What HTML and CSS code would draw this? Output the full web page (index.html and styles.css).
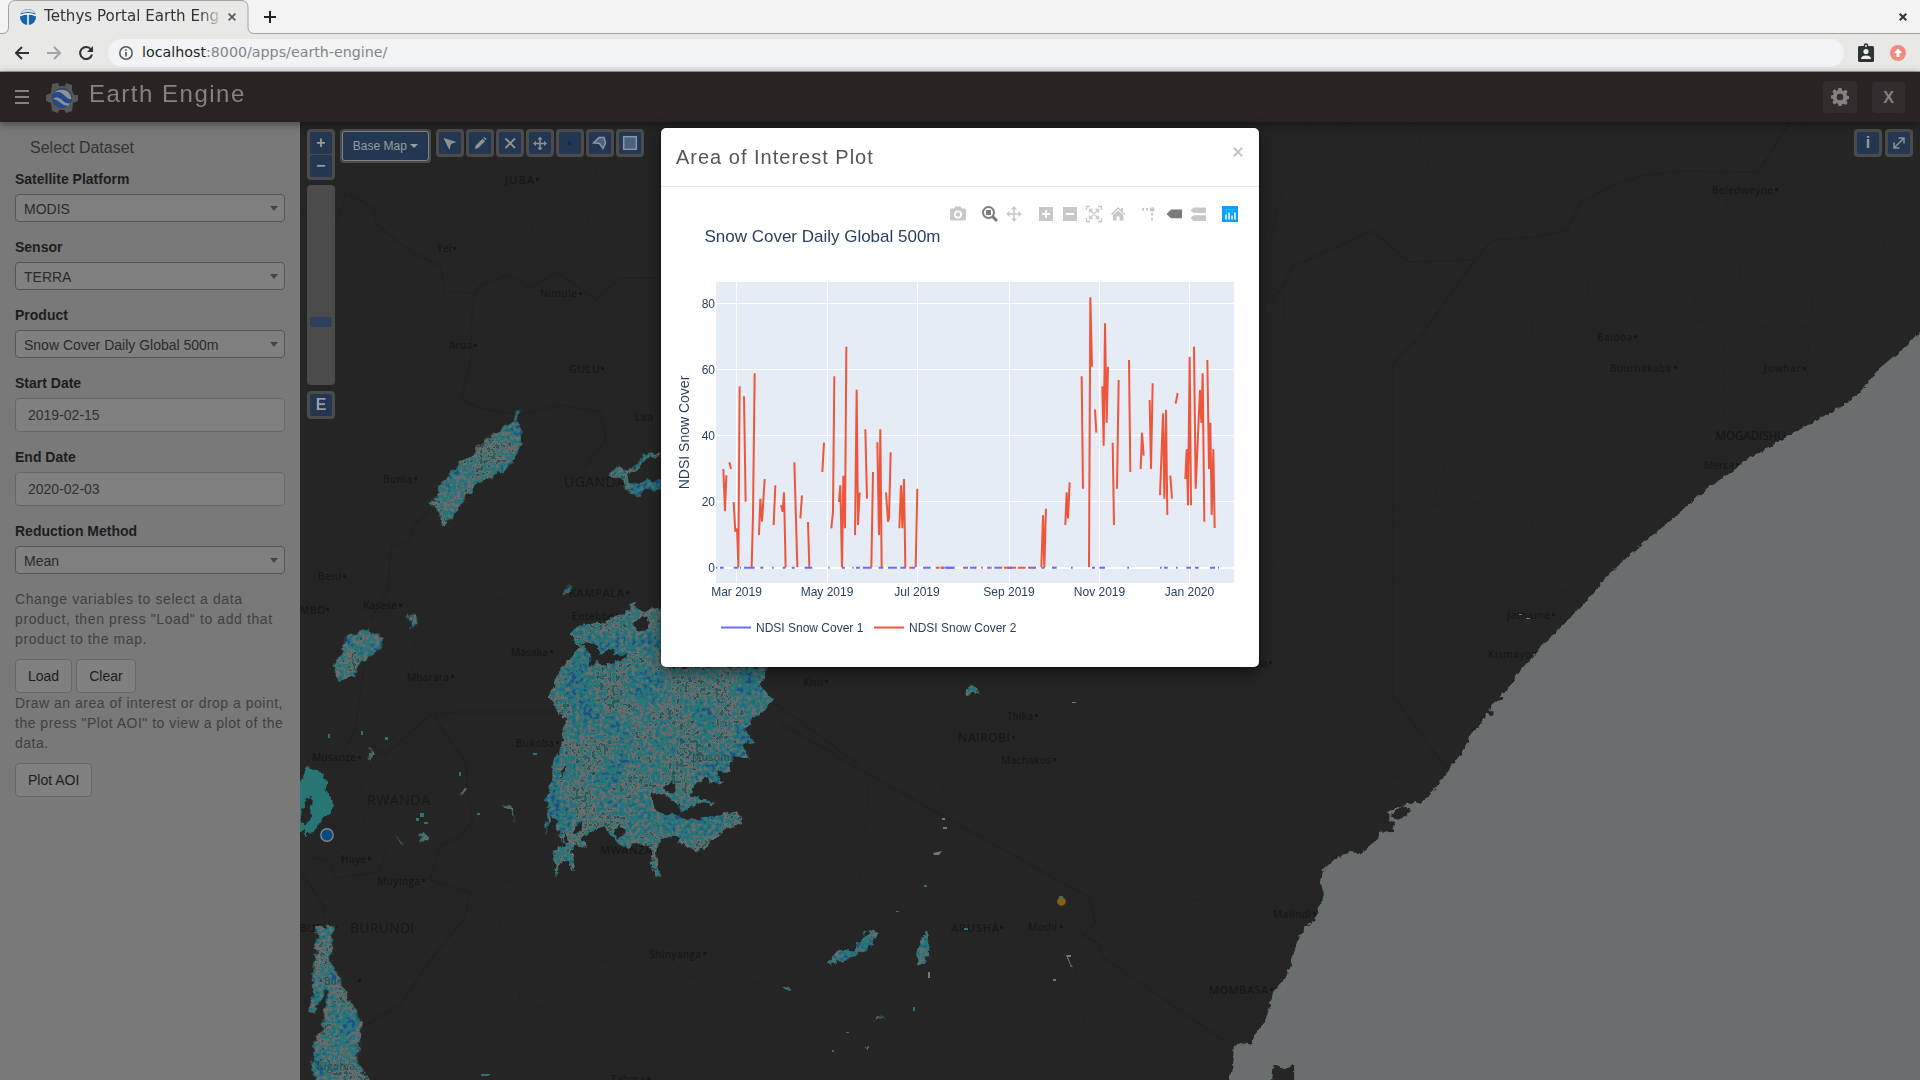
FILE: index.html
```html
<!DOCTYPE html>
<html lang="en">
<head>
<meta charset="utf-8">
<title>Tethys Portal Earth Engine</title>
<link rel="stylesheet" href="styles.css">
</head>
<body>
<div class="browser">
  <div class="tabstrip">
    <svg class="tab-shape" width="260" height="34" viewBox="0 0 260 34"><path d="M0 34V33.500H2Q8.500 33.500 8.500 27V7.500Q8.500 .5 15.500 .5H241Q248 .5 248 7.500V27Q248 33.500 254.500 33.500H260V34Z" fill="#e8e8e6"/><path d="M0 33.500H2Q8.500 33.500 8.500 27V7.500Q8.500 .5 15.500 .5H241Q248 .5 248 7.500V27Q248 33.500 254.500 33.500H260" fill="none" stroke="#a2a2a0"/></svg>
    <div class="tab">
      <svg width="16" height="16" viewBox="0 0 16 16"><circle cx="8" cy="8" r="8" fill="#1565a8"/><path d="M1 4.500A8 8 0 0 1 15 4.500Q8 1.500 1 4.500Z" fill="#c8e0f0"/><path d="M0 6.500Q8 3 16 6.500M8 5.500V16" stroke="#fff" stroke-width="1.500" fill="none"/></svg>
      <span class="tab-title">Tethys Portal Earth Eng</span>
      <svg width="8" height="8" viewBox="0 0 8 8"><path d="M.6 .6 7.400 7.400M7.400 .6 .6 7.400" stroke="#55595c" stroke-width="1.700"/></svg>
    </div>
    <svg class="new-tab" width="12" height="12" viewBox="0 0 12 12"><path d="M6 0V12M0 6H12" stroke="#222" stroke-width="2"/></svg>
    <svg class="win-close" width="8" height="8" viewBox="0 0 8 8"><path d="M.7 .7 7.300 7.300M7.300 .7 .7 7.300" stroke="#2e3436" stroke-width="2"/></svg>
  </div>
  <div class="navbar">
    <svg width="14" height="14" viewBox="0 0 14 14"><path d="M14 7H1.500M7 1 1 7 7 13" fill="none" stroke="#2e3234" stroke-width="2"/></svg>
    <svg width="14" height="14" viewBox="0 0 14 14"><path d="M0 7H12.500M7 1 13 7 7 13" fill="none" stroke="#a2a3a3" stroke-width="2"/></svg>
    <svg width="14" height="14" viewBox="0 0 14 14"><path d="M12 3.500A6 6 0 1 0 13 8.500" fill="none" stroke="#2e3234" stroke-width="2"/><path d="M14 0V6H8Z" fill="#2e3234"/></svg>
    <div class="omnibox">
      <svg width="14" height="14" viewBox="0 0 14 14"><circle cx="7" cy="7" r="6.200" fill="none" stroke="#55595c" stroke-width="1.500"/><path d="M7 6V10.500M7 3.300V4.800" stroke="#55595c" stroke-width="1.600"/></svg>
      <span class="url"><b>localhost</b>:8000/apps/earth-engine/</span>
    </div>
    <svg class="ext" width="16" height="20" viewBox="0 0 16 20"><rect y="3" width="16" height="16" rx="1.500" fill="#2e3436"/><circle cx="8" cy="2.500" r="2.200" fill="#2e3436"/><circle cx="8" cy="3" r="1" fill="#eee"/><circle cx="8" cy="8.500" r="2.600" fill="#eee"/><path d="M3 16Q3 12.500 8 12.500T13 16Z" fill="#eee"/></svg>
    <svg class="upd" width="16" height="16" viewBox="0 0 16 16"><circle cx="8" cy="8" r="8" fill="#f28b82"/><path d="M8 3.500 12 8H9.500V12H6.500V8H4Z" fill="#fff"/></svg>
  </div>
</div>

<header class="app-header">
  <span class="burger"><i></i><i></i><i></i></span>
  <svg class="logo" width="32" height="32" viewBox="0 0 32 32"><g fill="#555759"><circle cx="16" cy="16" r="12"/><path d="M6 2 12 1 14 6H18L20 1 26 3 26 9 28 13H32V19L27 21 26 29 20 31 17 26H14L12 31 6 29 5 21 0 19V13L5 11Z"/></g><circle cx="16" cy="16" r="10" fill="#3b3d40"/><circle cx="16" cy="16" r="9.500" fill="#24488c"/><path d="M7.500 12Q12 7 18 13T25.500 16.500Q24 10 20 8.500T10 9ZM7 17Q11 13 16 18T24.500 21L22 24Q18 24 14 20.500T7 17Z" fill="#8e9092"/></svg>
  <h1>Earth Engine</h1>
  <div class="header-buttons">
    <span class="hbtn gear"><svg width="18" height="18" viewBox="0 0 18 18"><path fill="#838181" fill-rule="evenodd" d="M7.500 0h3l.5 2.500 1.500.6 2.100-1.400 2.100 2.100-1.400 2.100.6 1.500 2.100.5v3l-2.100.5-.6 1.500 1.400 2.100-2.100 2.100-2.100-1.400-1.500.6-.5 2.500h-3L7 15.700l-1.500-.6-2.100 1.400-2.100-2.100 1.400-2.100L2.100 11 0 10.500v-3L2.100 7l.6-1.500L1.300 3.400l2.100-2.100 2.100 1.400L7 2.100ZM9 5.700a3.300 3.300 0 1 0 0 6.600a3.300 3.300 0 1 0 0-6.600Z"/></svg></span>
    <span class="hbtn exit">X</span>
  </div>
</header>

<main class="workspace">
  <aside class="sidebar">
    <h2>Select Dataset</h2>
    <label>Satellite Platform</label>
    <div class="select">MODIS</div>
    <label>Sensor</label>
    <div class="select">TERRA</div>
    <label>Product</label>
    <div class="select">Snow Cover Daily Global 500m</div>
    <label>Start Date</label>
    <div class="input">2019-02-15</div>
    <label>End Date</label>
    <div class="input">2020-02-03</div>
    <label>Reduction Method</label>
    <div class="select">Mean</div>
    <p>Change variables to select a data product, then press "Load" to add that product to the map.</p>
    <div class="buttons"><span class="btn">Load</span><span class="btn">Clear</span></div>
    <p class="tight">Draw an area of interest or drop a point, the press "Plot AOI" to view a plot of the data.</p>
    <div class="buttons"><span class="btn">Plot AOI</span></div>
  </aside>

  <section class="map">
    <svg class="map-canvas" width="1620" height="958" viewBox="300 122 1620 958">
      <defs>
        <filter id="snow" filterUnits="userSpaceOnUse" x="290" y="380" width="760" height="710" color-interpolation-filters="sRGB">
          <feTurbulence type="fractalNoise" baseFrequency=".12" numOctaves="3" seed="8" result="edge"/>
          <feDisplacementMap in="SourceGraphic" in2="edge" scale="9" xChannelSelector="R" yChannelSelector="G" result="shape"/>
          <feTurbulence type="fractalNoise" baseFrequency=".03" numOctaves="5" seed="3"/>
          <feColorMatrix values="2 0 0 0 -.5  2 0 0 0 -.5  2 0 0 0 -.5  0 0 0 0 1" result="broad"/>
          <feTurbulence type="fractalNoise" baseFrequency=".25" numOctaves="3" seed="5"/>
          <feColorMatrix values="0 2.6 0 0 -.8  0 2.6 0 0 -.8  0 2.6 0 0 -.8  0 0 0 0 1" result="fine"/>
          <feComposite in="broad" in2="fine" operator="arithmetic" k2=".5" k3=".6" k4="-.05"/>
          <feComponentTransfer>
            <feFuncR type="discrete" tableValues=".14 .14 .14 .14 .15 .15 .15 .17 .30 .42 .42 .42 .38 .15 .15 .15"/>
            <feFuncG type="discrete" tableValues=".30 .36 .40 .43 .46 .46 .47 .46 .43 .42 .43 .43 .42 .32 .38 .38"/>
            <feFuncB type="discrete" tableValues=".52 .50 .49 .49 .48 .48 .48 .46 .44 .43 .43 .43 .43 .32 .38 .38"/>
          </feComponentTransfer>
          <feComposite in2="shape" operator="in"/>
        </filter>
        <filter id="coast" filterUnits="userSpaceOnUse" x="1180" y="300" width="760" height="800" color-interpolation-filters="sRGB">
          <feTurbulence type="fractalNoise" baseFrequency=".2" numOctaves="2" seed="2" result="n"/>
          <feDisplacementMap in="SourceGraphic" in2="n" scale="5" xChannelSelector="R" yChannelSelector="G"/>
        </filter>
        <filter id="shore" filterUnits="userSpaceOnUse" x="290" y="750" width="60" height="110" color-interpolation-filters="sRGB">
          <feTurbulence type="fractalNoise" baseFrequency=".15" numOctaves="3" seed="4" result="n"/>
          <feDisplacementMap in="SourceGraphic" in2="n" scale="6" xChannelSelector="R" yChannelSelector="G"/>
        </filter>
      </defs>
      <rect x="300" y="122" width="1620" height="958" fill="#252525"/>

      <g class="border">
        <path d="M780 723 870 775 1090 898 1095 923 1083 935 1098 943 1103 957 1227 1043"/>
        <path d="M1790 122 1758 172 1682 171 1645 175 1613 185 1581 203 1567 230 1535 237 1492 240 1475 260 1420 337 1393 363V697L1446 768"/>
        <path d="M1475 260 1409 262 1372 231 1292 267 1283 287 1260 310"/>
        <path d="M300 210 339 220 345 193 373 207 376 223 404 247 441 267 445 292 475 293 478 287 508 275 531 287 557 272 596 300 620 278 660 278"/>
        <path d="M475 293 470 330 473 350 461 400 480 408 520 415 560 405 600 412 606 440 583 470M430 510 414 525 411 540 391 547 388 590 370 620M365 660 355 730 345 750M370 745 385 755 430 715 460 712 555 712M433 715 466 763 468 795 473 820 460 837 440 845 430 880 470 893 465 918 430 960 400 1005 365 1025M310 857 330 862 335 878 380 872 386 850M300 870 323 905 325 920M770 700 860 765"/>
      </g>
      <g class="border dashed">
        <path d="M378 203 400 182 416 193 440 172 480 130M535 215 530 240 545 265 556 272M587 140 600 187 585 230 560 250M370 610 400 570 440 520 480 560 510 580 560 640 580 690M415 640 410 690 440 715 480 680 510 620M360 780 365 828 340 850M440 555 455 590 500 600 540 585 600 570M485 885 515 880 535 910 500 940 499 920 520 960 519 1010 560 1005M606 935 620 910 640 940 700 950 725 945 765 960 778 1000 750 1050 755 1080M560 965 610 960 640 980 720 975 790 990"/>
        <path d="M870 775 865 830 860 880 785 850M945 770 940 815M945 740 965 725 965 705M1040 770 1060 805 1110 840 1090 830 1115 873 1108 910M1125 810 1160 870 1175 900 1230 900M950 940 990 960 1030 945 1050 935 1075 965 1085 1025 1120 1040 1230 985"/>
        <path d="M1305 125 1320 132 1355 125M1300 140 1280 200 1265 260M1283 290 1284 320 1310 330 1350 365 1358 400M1415 122 1430 170 1450 205 1490 235M1510 245 1535 270 1532 340 1585 344 1588 285 1568 230M1588 287 1615 295 1635 280 1655 263 1680 270 1695 295 1695 320 1735 325 1780 328 1845 325 1860 290 1885 267 1920 288M1722 175 1730 225 1740 270 1737 323M1770 175 1790 220 1815 270 1810 325 1805 400M1800 122 1820 155 1855 162 1885 155 1860 215 1885 240V267M1397 508 1525 500 1552 590 1597 592M1432 505 1452 444 1522 444 1575 487 1725 420V330M1575 487 1620 558M1265 560 1290 580 1340 604 1395 580M1323 805 1385 778 1446 772M1230 900 1295 832 1320 868M1395 525 1450 552 1490 570 1520 620"/>
      </g>

      <g class="labels">
        <text x="505" y="184" textLength="29" class="caps">JUBA</text><text x="437" y="252">Yei</text><text x="540" y="297" textLength="37">Nimule</text><text x="449" y="349" textLength="23">Arua</text><text x="569" y="373" textLength="31" class="caps">GULU</text><text x="635" y="421">Lira</text><text x="383" y="483" textLength="29">Bunia</text><text x="564" y="487" textLength="61" class="big">UGANDA</text><text x="318" y="580" textLength="23">Beni</text><text x="300" y="614" textLength="25">MBO</text><text x="363" y="609" textLength="34">Kasese</text><text x="569" y="597" textLength="55" class="caps">KAMPALA</text><text x="572" y="620" textLength="42">Entebbe</text><text x="511" y="656" textLength="37">Masaka</text><text x="407" y="681" textLength="42">Mbarara</text><text x="516" y="747" textLength="38">Bukoba</text><text x="312" y="761" textLength="44">Musanze</text><text x="367" y="805" textLength="63" class="big">RWANDA</text><text x="341" y="863" textLength="25">Huye</text><text x="377" y="885" textLength="43">Muyinga</text><text x="350" y="933" textLength="64" class="big">BURUNDI</text><text x="300" y="932" textLength="30" class="caps">BURA</text><text x="649" y="958" textLength="52">Shinyanga</text><text x="600" y="854" textLength="52" class="caps">MWANZA</text><text x="611" y="1083" textLength="34">Tabora</text><text x="803" y="686" textLength="20">Kisii</text><text x="1007" y="720" textLength="26">Thika</text><text x="958" y="742" textLength="52" class="mid">NAIROBI</text><text x="1001" y="764" textLength="50">Machakos</text><text x="951" y="932" textLength="48" class="caps">ARUSHA</text><text x="1028" y="931" textLength="29">Moshi</text><text x="1712" y="194" textLength="61">Beledweyne</text><text x="1597" y="341" textLength="35">Baidoa</text><text x="1610" y="372" textLength="61">Buurhakaba</text><text x="1764" y="372" textLength="37">Jowhar</text><text x="1715" y="440" textLength="71" class="mid">MOGADISHU</text><text x="1704" y="469" textLength="30">Merca</text><text x="1507" y="619" textLength="43">Jamame</text><text x="1488" y="658" textLength="43">Kismayo</text><text x="1273" y="918" textLength="38">Malindi</text><text x="1209" y="994" textLength="59" class="caps">MOMBASA</text><text x="1257" y="667">sa</text>
        <path d="M536 178h3v3h-3zM453 247h3v3h-3zM579 292h3v3h-3zM474 344h3v3h-3zM601 367h3v3h-3zM414 477h3v3h-3zM343 575h3v3h-3zM326 608h3v3h-3zM399 604h3v3h-3zM626 591h3v3h-3zM616 614h3v3h-3zM550 650h3v3h-3zM451 675h3v3h-3zM556 741h3v3h-3zM358 756h3v3h-3zM368 857h3v3h-3zM422 879h3v3h-3zM334 926h3v3h-3zM703 952h3v3h-3zM655 849h3v3h-3zM647 1077h3v3h-3zM825 680h3v3h-3zM1035 714h3v3h-3zM1012 736h3v3h-3zM1053 758h3v3h-3zM1000 926h3v3h-3zM1060 925h3v3h-3zM1775 188h3v3h-3zM1634 335h3v3h-3zM1674 366h3v3h-3zM1803 367h3v3h-3zM1788 434h3v3h-3zM1736 463h3v3h-3zM1552 613h3v3h-3zM1533 652h3v3h-3zM1313 912h3v3h-3zM1270 988h3v3h-3zM1269 661h3v3h-3zM739 756h3v3h-3zM358 979h3v3h-3z"/>
      </g>

      <g filter="url(#coast)" fill="#6a6e6f">
        <g transform="translate(1200 380) scale(.45918 .44643)">
          <path d="M1600-135 1525-65 1480-27 1458 0 1440 25 1410 50 1360 80 1330 98 1290 120 1245 147 1200 172 1170 197 1120 232 1070 272 1025 315 970 360 925 402 880 447 860 475 825 512 790 550 738 602 715 632 690 662 670 695 645 715 625 745 608 775 590 795 570 835 540 875 520 905 500 930 480 950 470 943 440 953 413 965 412 990 425 992 420 1010 390 1012 388 1030 350 1060 325 1057 295 1072 268 1097 263 1130 270 1148 260 1180 250 1210 222 1232 210 1265 200 1300 188 1335 160 1370 150 1410 140 1440 122 1460 110 1488 85 1485 73 1495 72 1535 55 1600H1600Z"/>
          <path fill="#252525" d="M415 975 440 953 462 965 432 985ZM160 1533 180 1543 205 1535V1600H155ZM640 710h20v8h-20zM615 740h22v10h-22z"/>
        </g>
      </g>

      <g filter="url(#snow)" fill="#278">
        <path fill-rule="evenodd" transform="translate(530 420) scale(.33333)" d="M303 545 318 550 320 570 345 580 350 570 375 560 410 575V740H722L700 760 695 800 715 830 732 838 715 860 690 880 670 900 665 915 640 930 672 962 635 975 660 1018 610 1010 600 1030 595 1055 560 1055 585 1085 545 1090 520 1075 490 1105 485 1125 520 1140 558 1145 540 1152 500 1148 460 1178 440 1155 410 1125 390 1130 365 1120 375 1170 400 1185 440 1180 470 1200 550 1190 615 1172 635 1190 632 1215 590 1230 560 1245 540 1260 520 1290 480 1285 455 1270 440 1250 400 1250 380 1280 375 1330 395 1370 380 1368 362 1330 362 1275 340 1285 320 1265 290 1280 260 1265 240 1245 220 1215 190 1230 155 1255 175 1288 140 1275 120 1290 130 1320 138 1358 115 1325 90 1330 80 1372 74 1320 65 1295 100 1280 95 1250 80 1230 75 1200 60 1190 45 1245 55 1150 38 1150 60 1110 75 1010 90 1000 105 920 100 890 80 885 75 850 55 830 85 760 120 710 150 680 120 650 120 640 150 615 200 610 240 590 290 580ZM175 745 185 700 150 670 200 680 205 705 225 690 250 690 245 708 290 700 280 720 262 725 255 738 235 725 228 740 205 722ZM400 1098 436 1090 435 1118 410 1115ZM92 1050 106 1035 98 1082ZM128 1225 155 1205 155 1230 130 1245ZM250 1235 270 1218 288 1235 268 1260ZM100 1235 118 1260 105 1270ZM310 610 340 590 360 600 350 635 320 630Z"/>
        <path transform="translate(530 420) scale(.33333)" d="M235 165 260 140 275 150 310 140 350 95 395 100V112L360 108 320 145 290 165 295 190 330 190 350 178 395 180V208L350 208 330 228 290 210 278 180ZM100 512 128 498 120 515 104 518Z"/>
        <path transform="translate(0 440) scale(.40816 .33333)" d="M1280-92 1268-68 1275-20V20L1255 70 1215 105 1170 125 1145 165 1122 210 1105 235 1095 257 1078 250 1075 205 1048 190 1075 170 1080 130 1110 90 1150 50 1185 5 1225-30 1258-55 1264-85ZM815 680 835 640 850 590 900 568 920 585 940 590 930 630 915 650 880 670 870 705 830 720ZM992 525 1020 525 1028 545 1010 562 1002 548Z"/>
        <path transform="translate(300 720) scale(.33333)" d="M48 620H98V690L90 720 120 780 150 850 183 900 180 960 170 1020 180 1050 225 1090H42L38 980 55 935 68 930 80 815 72 810 55 850 40 882 28 875 35 830 38 750 48 700ZM352 350 370 335 384 352 360 374ZM205 100 215 85 222 98 210 125ZM476 228 490 205 502 200 495 215 482 232ZM1058 385 1068 385 1076 470 1068 470ZM605 255 630 255 640 280 640 310 632 275ZM285 345 320 380 300 370Z"/>
        <path transform="translate(780 640) scale(.33333)" d="M555 150 575 138 593 150 570 167ZM142 965 165 935 215 930 250 890 280 862 296 882 265 930 215 950 150 978ZM440 875 450 890 443 945 415 983 412 940 425 890ZM345 810h12v9h-12zM18 1043h15v9h-15zM255 1225 270 1215 270 1226ZM285 1145 312 1124 298 1140Z"/>
      </g>
      <path filter="url(#shore)" fill="#277674" fill-rule="evenodd" d="M290 793 302 780 305 768 308 766 313 770 325 773 327 790 330 798 335 806 325 817 320 822 315 832 307 833 306 837 303 830 290 837ZM306 798 312 797 310 817 304 827 301 818Z"/>
      <g fill="#747879"><path d="M933 853 942 851 939 855 934 855ZM942 818h3v2h-3zM943 827h4v2h-4zM1066 955h5v2h-3l3 8 2 2h-2zM928 972h2v6h-2zM1053 979h3v2h-3zM1072 702h4v1h-4zM1519 614h3v1h-3zM1526 618h4v1h-4z"/></g>
      <g fill="#277674"><path d="M924 885h3v2h-3zM913 1007h2v4h-2zM328 734h2v4h-2zM361 731h2v4h-2zM385 737h3v3h-3zM533 753h4v2h-4zM459 772h2v4h-2zM420 813h4v4h-4zM424 822h4v2h-4zM416 818h3v3h-3zM477 813h3v2h-3zM481 1074h10l-3 2h-7zM846 1032h3v1h-3zM832 1050h2v2h-2zM964 928h4v2h-4zM1059 896h4v2h-4z"/></g>
      <g class="labels over"><text x="692" y="761" textLength="44">Musoma</text><text x="324" y="985" textLength="30">Bururi</text><text x="317" y="1070" textLength="38">Kigoma</text></g>
      <circle cx="1061.400" cy="901.500" r="4.300" fill="#866019"/>
      <circle cx="327" cy="835" r="6.200" fill="#004c83" stroke="#858585" stroke-width="1.400"/>
    </svg>

    <div class="zoom-stack">
      <div class="ctl zoom"><span>+</span><span>−</span></div>
      <div class="ctl slider"><i></i></div>
      <div class="ctl extent"><span>E</span></div>
    </div>
    <div class="toolbar">
      <div class="ctl basemap"><span>Base Map <i class="caret"></i></span></div>
      <div class="ctl"><span><svg viewBox="0 0 22 22"><path d="M4.500 6 17.500 10 12 12 10.500 18Z" fill="#8f9296"/></svg></span></div>
      <div class="ctl"><span><svg viewBox="0 0 22 22"><path d="M6 17 6.700 13.500 13.500 6.700 16 9.200 9.200 16ZM14.200 6 15.500 5 17.500 7 16.700 8.300Z" fill="#8f9296"/></svg></span></div>
      <div class="ctl"><span><svg viewBox="0 0 22 22"><path d="M6.500 6.500 16 16M16 6.500 6.500 16" stroke="#8f9296" stroke-width="1.800"/></svg></span></div>
      <div class="ctl"><span><svg viewBox="0 0 22 22"><path d="M11 6V17M5.500 11.500H16.500" stroke="#8f9296" stroke-width="1.500"/><path d="M11 4.500 13.500 7.500H8.500ZM11 18.500 13.500 15.500H8.500ZM4 11.500 7 9V14ZM18 11.500 15 9V14Z" fill="#8f9296"/></svg></span></div>
      <div class="ctl"><span><svg viewBox="0 0 22 22"><circle cx="10.500" cy="11" r="2" fill="#032b6c"/></svg></span></div>
      <div class="ctl"><span><svg viewBox="0 0 22 22"><path d="M4.500 11 10 5.500 15 5.500 16.500 11 14 16.500 10.500 11.500Z" fill="#4e6178" stroke="#8796a8" stroke-width="1.500"/></svg></span></div>
      <div class="ctl"><span><svg viewBox="0 0 22 22"><rect x="4.700" y="4.700" width="12.600" height="12.600" fill="#4b607e" stroke="#8796a8" stroke-width="1.500"/></svg></span></div>
    </div>
    <div class="corner">
      <div class="ctl"><span>i</span></div>
      <div class="ctl"><span><svg viewBox="0 0 22 22"><path d="M7 15 15 7M10.500 6H16V11.500M6 10.500V16H11.500" stroke="#8f9296" stroke-width="1.500" fill="none"/></svg></span></div>
    </div>
  </section>
</main>

<div class="modal">
  <div class="modal-head"><h4>Area of Interest Plot</h4><svg width="10" height="10" viewBox="0 0 10 10"><path d="M.8 .8 9.200 9.200M9.200 .8 .8 9.200" stroke="#c6c6c6" stroke-width="2.200"/></svg></div>
  <svg class="plot" width="598" height="480" viewBox="661 187 598 480">
    <g fill="#c8c8c8">
      <path fill-rule="evenodd" d="M950 210Q950 208.500 951.500 208.500H954L955.500 206.500H960.500L962 208.500H964.500Q966 208.500 966 210V219Q966 220.500 964.500 220.500H951.500Q950 220.500 950 219ZM958 210.500a4 4 0 1 0 0 8a4 4 0 1 0 0-8ZM958 212.300a2.200 2.200 0 1 1 0 4.400a2.200 2.200 0 1 1 0-4.400Z"/>
      <path d="M1014 206 1017 209.500H1014.800V213.200H1018.500V211L1022 214 1018.500 217V214.800H1014.800V218.500H1017L1014 222 1011 218.500H1013.200V214.800H1009.500V217L1006 214 1009.500 211V213.200H1013.200V209.500H1011Z"/>
      <path fill-rule="evenodd" d="M1039 207h14v14h-14zM1045 210v3h-3v2h3v3h2v-3h3v-2h-3v-3zM1063 207h14v14h-14zM1066 213v2h8v-2z"/>
      <path d="M1111 214 1118 207 1121 210V208H1123V212L1125.500 214 1124.500 215 1118 209 1112 215ZM1113 215 1118 210.500 1123.500 215V220.500H1119.500V216.500H1116.500V220.500H1113Z"/>
      <path d="M1142 208h2v2.500h-2zM1146 208h2v2.500h-2zM1150 208.500H1154V211H1150zM1151 213h2v2.500h-2zM1151 218h2v2.500h-2z"/><circle cx="1152.300" cy="209.500" r="2.300"/>
      <path d="M1190.500 210.500 1193.500 207.500H1206V213H1193.500ZM1190.500 218 1193.500 215.300H1206V221H1193.500Z"/>
    </g>
    <path d="M1086.500 210V206.500H1090M1098 206.500H1101.500V210M1101.500 218V221.500H1098M1090 221.500H1086.500V218M1090 210 1098 218M1098 210 1090 218M1089.500 212.500V209.500H1092.500M1095.500 209.500H1098.500V212.500M1098.500 215.500V218.500H1095.500M1092.500 218.500H1089.500V215.500" fill="none" stroke="#c8c8c8" stroke-width="1.300"/>
    <circle cx="988.500" cy="212.500" r="5.500" fill="#fff" stroke="#7b7b7b" stroke-width="2"/><path d="M986 210h5v5h-5z" fill="#7b7b7b"/><path d="M992.500 216.500 997 221" stroke="#7b7b7b" stroke-width="3"/>
    <path d="M1166.500 214 1171 209.500H1182V218.300H1171Z" fill="#7b7b7b"/>
    <path d="M1222 206h16v16h-16z" fill="#119dff"/><path d="M1226 214.500v5M1229 212.500v7M1232 215.500v4M1235 212.500v7" stroke="#fff" stroke-width="1.500"/><path d="M1225.500 209.500h10M1225.500 212h2M1231.500 212h1.500" stroke="#25fefd" stroke-width="1.200" stroke-dasharray="1.500 1.500"/>

    <text x="704.500" y="242" class="ptitle" textLength="236">Snow Cover Daily Global 500m</text>
    <rect x="716" y="282" width="518" height="301" fill="#e5ecf6"/>
    <path d="M736.500 282V583M827.500 282V583M917.500 282V583M1009.500 282V583M1099.500 282V583M1189.500 282V583M716 303.500H1234M716 369.500H1234M716 435.500H1234M716 501.500H1234" stroke="#fff"/>
    <path d="M716 568H1234" stroke="#fff" stroke-width="2"/>
    <g class="trace" transform="translate(660 270) scale(.33333)">
      <path class="s1" d="M168 893H172M180 893H191M221 893H235M240 893H243M252 893H284M301 893H310M336 893H341M368 893H377M395 893H404M434 893H457M505 893H509M546 893H555M577 893H581M588 893H600M608 893H635M656 893H670M684 893H711M721 893H738M756 893H765M789 893H812M838 893H841M853 893H883"/>
      <path class="s2" d="M748 893H757M827 893H837M843 893H852"/>
      <path class="s2" d="M190 597 195 724 199 616M208 577 213 597M221 696 226 785 231 775 235 892 239 349M252 379 257 695M275 892 279 735 284 310M297 795 301 686 306 755 314 627M341 765 346 646M363 706 368 725 372 667 377 892M403 577 412 892M421 745 426 676M444 756 448 892M487 606 492 518M514 775 519 725 523 319M537 696 541 646 546 892 550 617 555 775 559 230M585 795 590 359 594 765 599 667M616 478 621 686M634 892 639 606M652 517 657 795 661 478 665 892M678 667 684 755 687 745 692 547M718 775 723 646 727 775 732 627 736 892M767 892 772 656"/>
    </g>
    <g class="trace" transform="translate(940 270) scale(.33333)">
      <path class="s2" d="M3 893H12M69 893H75M105 893H110M123 893H128M145 893H152M180 893H187M192 893H228M234 893H257M270 893H283"/>
      <path class="s1" d="M20 893H43M75 893H84M90 893H108M141 893H146M151 893H155M163 893H181M203 893H216M264 893H271M279 893H288M304 893H314M336 893H350M393 893H398M456 893H465M478 893H495M562 893H567M660 893H665M672 893H683M708 893H713M739 893H753M765 893H776M810 893H825M834 893H837"/>
      <path class="s2" d="M304 892 309 736 313 892 318 716M376 765 380 667 384 745 389 637M425 319 429 656M447 892 451 82 456 290M465 419 469 488M487 349 491 527 495 160 500 458 504 290M518 518 522 765M531 656 536 330M567 270 571 606M602 597 606 488 611 557M629 390 633 597 638 340M660 676 669 430 673 686 678 419 682 735M691 617 696 686M707 401 713 369M736 627 740 538 744 706 749 260 753 706M762 230 767 656 780 360 784 458 788 310 793 755M802 270 807 597 811 458 815 735 820 538 824 774"/>
    </g>
    <g class="ticks" text-anchor="end"><text x="715" y="308">80</text><text x="715" y="374">60</text><text x="715" y="440">40</text><text x="715" y="506">20</text><text x="715" y="572">0</text></g>
    <g class="ticks" text-anchor="middle"><text x="736.500" y="596">Mar 2019</text><text x="827" y="596">May 2019</text><text x="917" y="596">Jul 2019</text><text x="1009" y="596">Sep 2019</text><text x="1099.500" y="596">Nov 2019</text><text x="1189.500" y="596">Jan 2020</text></g>
    <text class="ytitle" transform="translate(689 432.500) rotate(-90)" text-anchor="middle">NDSI Snow Cover</text>
    <path d="M721 627.500h30" stroke="#636efa" stroke-width="2"/><path d="M874 627.500h30" stroke="#ef553b" stroke-width="2"/>
    <g class="ticks"><text x="756" y="632">NDSI Snow Cover 1</text><text x="909" y="632">NDSI Snow Cover 2</text></g>
  </svg>
</div>
</body>
</html>
```
FILE: styles.css
```css
* { box-sizing: border-box; }
body { margin: 0; width: 1920px; height: 1080px; overflow: hidden; font-family: "Liberation Sans", Arial, sans-serif; font-size: 14px; color: #262626; background: #252525; position: relative; }
svg { display: block; flex: none; }

.browser { font-family: "DejaVu Sans", sans-serif; height: 72px; }
.tabstrip { height: 34px; background: #f3f3f3; border-bottom: 1px solid #a2a2a0; display: flex; align-items: center; position: relative; }
.tab-shape { position: absolute; left: 0; top: 0; }
.tab { position: relative; display: flex; align-items: center; width: 248px; height: 34px; padding-left: 20px; }
.tab-title { width: 176px; margin: 0 8px 0 8px; padding-bottom: 1px; white-space: nowrap; font-size: 15.100px; color: #303436; -webkit-mask-image: linear-gradient(90deg, #000 88%, rgba(0,0,0,.15)); mask-image: linear-gradient(90deg, #000 88%, rgba(0,0,0,.15)); }
.new-tab { margin-left: 16px; }
.win-close { margin-left: auto; margin-right: 13px; }
.navbar { height: 38px; background: #e8e8e6; border-bottom: 1px solid #9da09c; display: flex; align-items: center; padding: 0 14px 0 15px; gap: 18px; }
.omnibox { flex: 1; height: 28px; border-radius: 14px; background: #f1f3f4; display: flex; align-items: center; gap: 9px; padding-left: 11px; margin: 0 0 0 -3px; }
.url { font-size: 14.250px; color: #80868b; padding-bottom: 2px; }
.url b { font-weight: normal; color: #24282b; }
.ext { margin-right: -2px; margin-left: -4px; }

.app-header { height: 50px; background: #292323; display: flex; align-items: center; padding-left: 15px; position: relative; z-index: 2; box-shadow: 0 2px 8px rgba(0,0,0,.45); }
.burger { display: grid; gap: 4px; width: 14px; }
.burger i { height: 2px; background: #858282; }
.logo { margin-left: 17px; margin-top: 2px; }
.app-header h1 { margin: 0 0 6px 11px; font-size: 24px; font-weight: 400; letter-spacing: 1.500px; color: #858282; }
.header-buttons { margin-left: auto; display: flex; gap: 15px; padding-right: 15px; align-items: flex-end; }
.hbtn { width: 33px; height: 31px; border-radius: 4px; background: #332d2d; display: flex; align-items: center; justify-content: center; color: #838181; font-size: 16px; font-weight: bold; }
.gear { width: 34px; height: 32px; }

.workspace { display: flex; height: 958px; }
.sidebar { width: 300px; background: #797979; padding: 16px 15px 15px; flex: none; }
.sidebar h2 { margin: 0 0 11px 15px; font-size: 16px; font-weight: 400; line-height: 20px; color: #333; }
.sidebar label { display: block; font-weight: bold; line-height: 20px; margin-bottom: 5px; color: #1d1d1d; }
.select, .input { border: 1px solid #555; border-radius: 4px; height: 28px; line-height: 28px; padding: 0 8px; margin-bottom: 15px; color: #2b2b2b; background: #808080; position: relative; }
.select::after { content: ""; position: absolute; right: 6px; top: 11px; border: 4px solid transparent; border-top: 5px solid #454545; border-bottom: 0; }
.input { height: 34px; line-height: 32px; padding: 0 12px; border-color: #666; color: #303030; }
.sidebar p { margin: 0 -8px 0 0; line-height: 20px; letter-spacing: .6px; color: #404040; }
.sidebar .tight { letter-spacing: .5px; }
.buttons { display: flex; gap: 4px; margin-top: 10px; }
.btn { border: 1px solid #666; border-radius: 4px; background: #808080; height: 34px; line-height: 32px; padding: 0 12px; color: #1c1c1c; }

.map { position: relative; flex: 1; }
.map-canvas { position: absolute; inset: 0; }
.border { fill: none; stroke: #222; stroke-width: 1.500; }
.dashed { stroke-width: 1; stroke-dasharray: 3 2; }
.labels { font-family: "Open Sans", "Noto Sans", sans-serif; font-size: 10px; font-weight: 600; fill: #151819; }
.labels .big { font-size: 14px; font-weight: 500; }
.labels .caps { font-size: 11px; }
.labels .mid { font-size: 12px; }
.over { fill: rgba(30,50,55,.5); }

.zoom-stack { position: absolute; left: 7px; top: 7px; width: 28px; display: grid; gap: 5px; }
.ctl { background: #4b4b4b; border-radius: 4px; padding: 3px; width: 28px; }
.ctl span { display: flex; align-items: center; justify-content: center; height: 22px; background: #243750; border-radius: 2px; color: #9a9c9f; font-weight: bold; font-size: 16px; }
.ctl span svg { width: 22px; height: 22px; }
.zoom { display: grid; gap: 1px; }
.slider { height: 200px; }
.slider i { display: block; height: 10px; margin-top: 129px; background: #2c405c; border-radius: 2px; }
.extent { margin-top: 1px; }
.toolbar { position: absolute; left: 40px; top: 7px; display: flex; gap: 2px; align-items: flex-start; }
.toolbar .basemap { width: 91px; margin-right: 3px; padding: 2px; }
.ctl.basemap span { height: 30px; border: 1px solid #7d8187; border-radius: 3px; font-size: 12px; font-weight: normal; white-space: pre; }
.caret { border: 4px solid transparent; border-top-color: #9a9c9f; border-bottom: 0; }
.corner { position: absolute; right: 7px; top: 7px; display: flex; gap: 3px; }

.modal { position: absolute; z-index: 5; left: 661px; top: 128px; width: 598px; height: 539px; background: #fff; border-radius: 5px; box-shadow: 0 5px 15px rgba(0,0,0,.5), 0 0 0 1px rgba(0,0,0,.2); }
.modal-head { height: 59px; border-bottom: 1px solid #e5e5e5; display: flex; justify-content: space-between; padding: 0 16px 0 15px; align-items: center; }
.modal-head h4 { margin: 0; font-size: 20px; font-weight: 400; letter-spacing: 1px; color: #555; }
.modal-head svg { margin-bottom: 10px; }
.plot text { fill: #2a3f5f; }
.plot .ptitle { font-size: 17px; }
.plot .ytitle { font-size: 14px; }
.ticks { font-size: 12px; }
.trace path { fill: none; stroke-width: 6; stroke-linejoin: bevel; }
.s1 { stroke: #636efa; }
.trace .s2 { stroke: #ef553b; }
```
